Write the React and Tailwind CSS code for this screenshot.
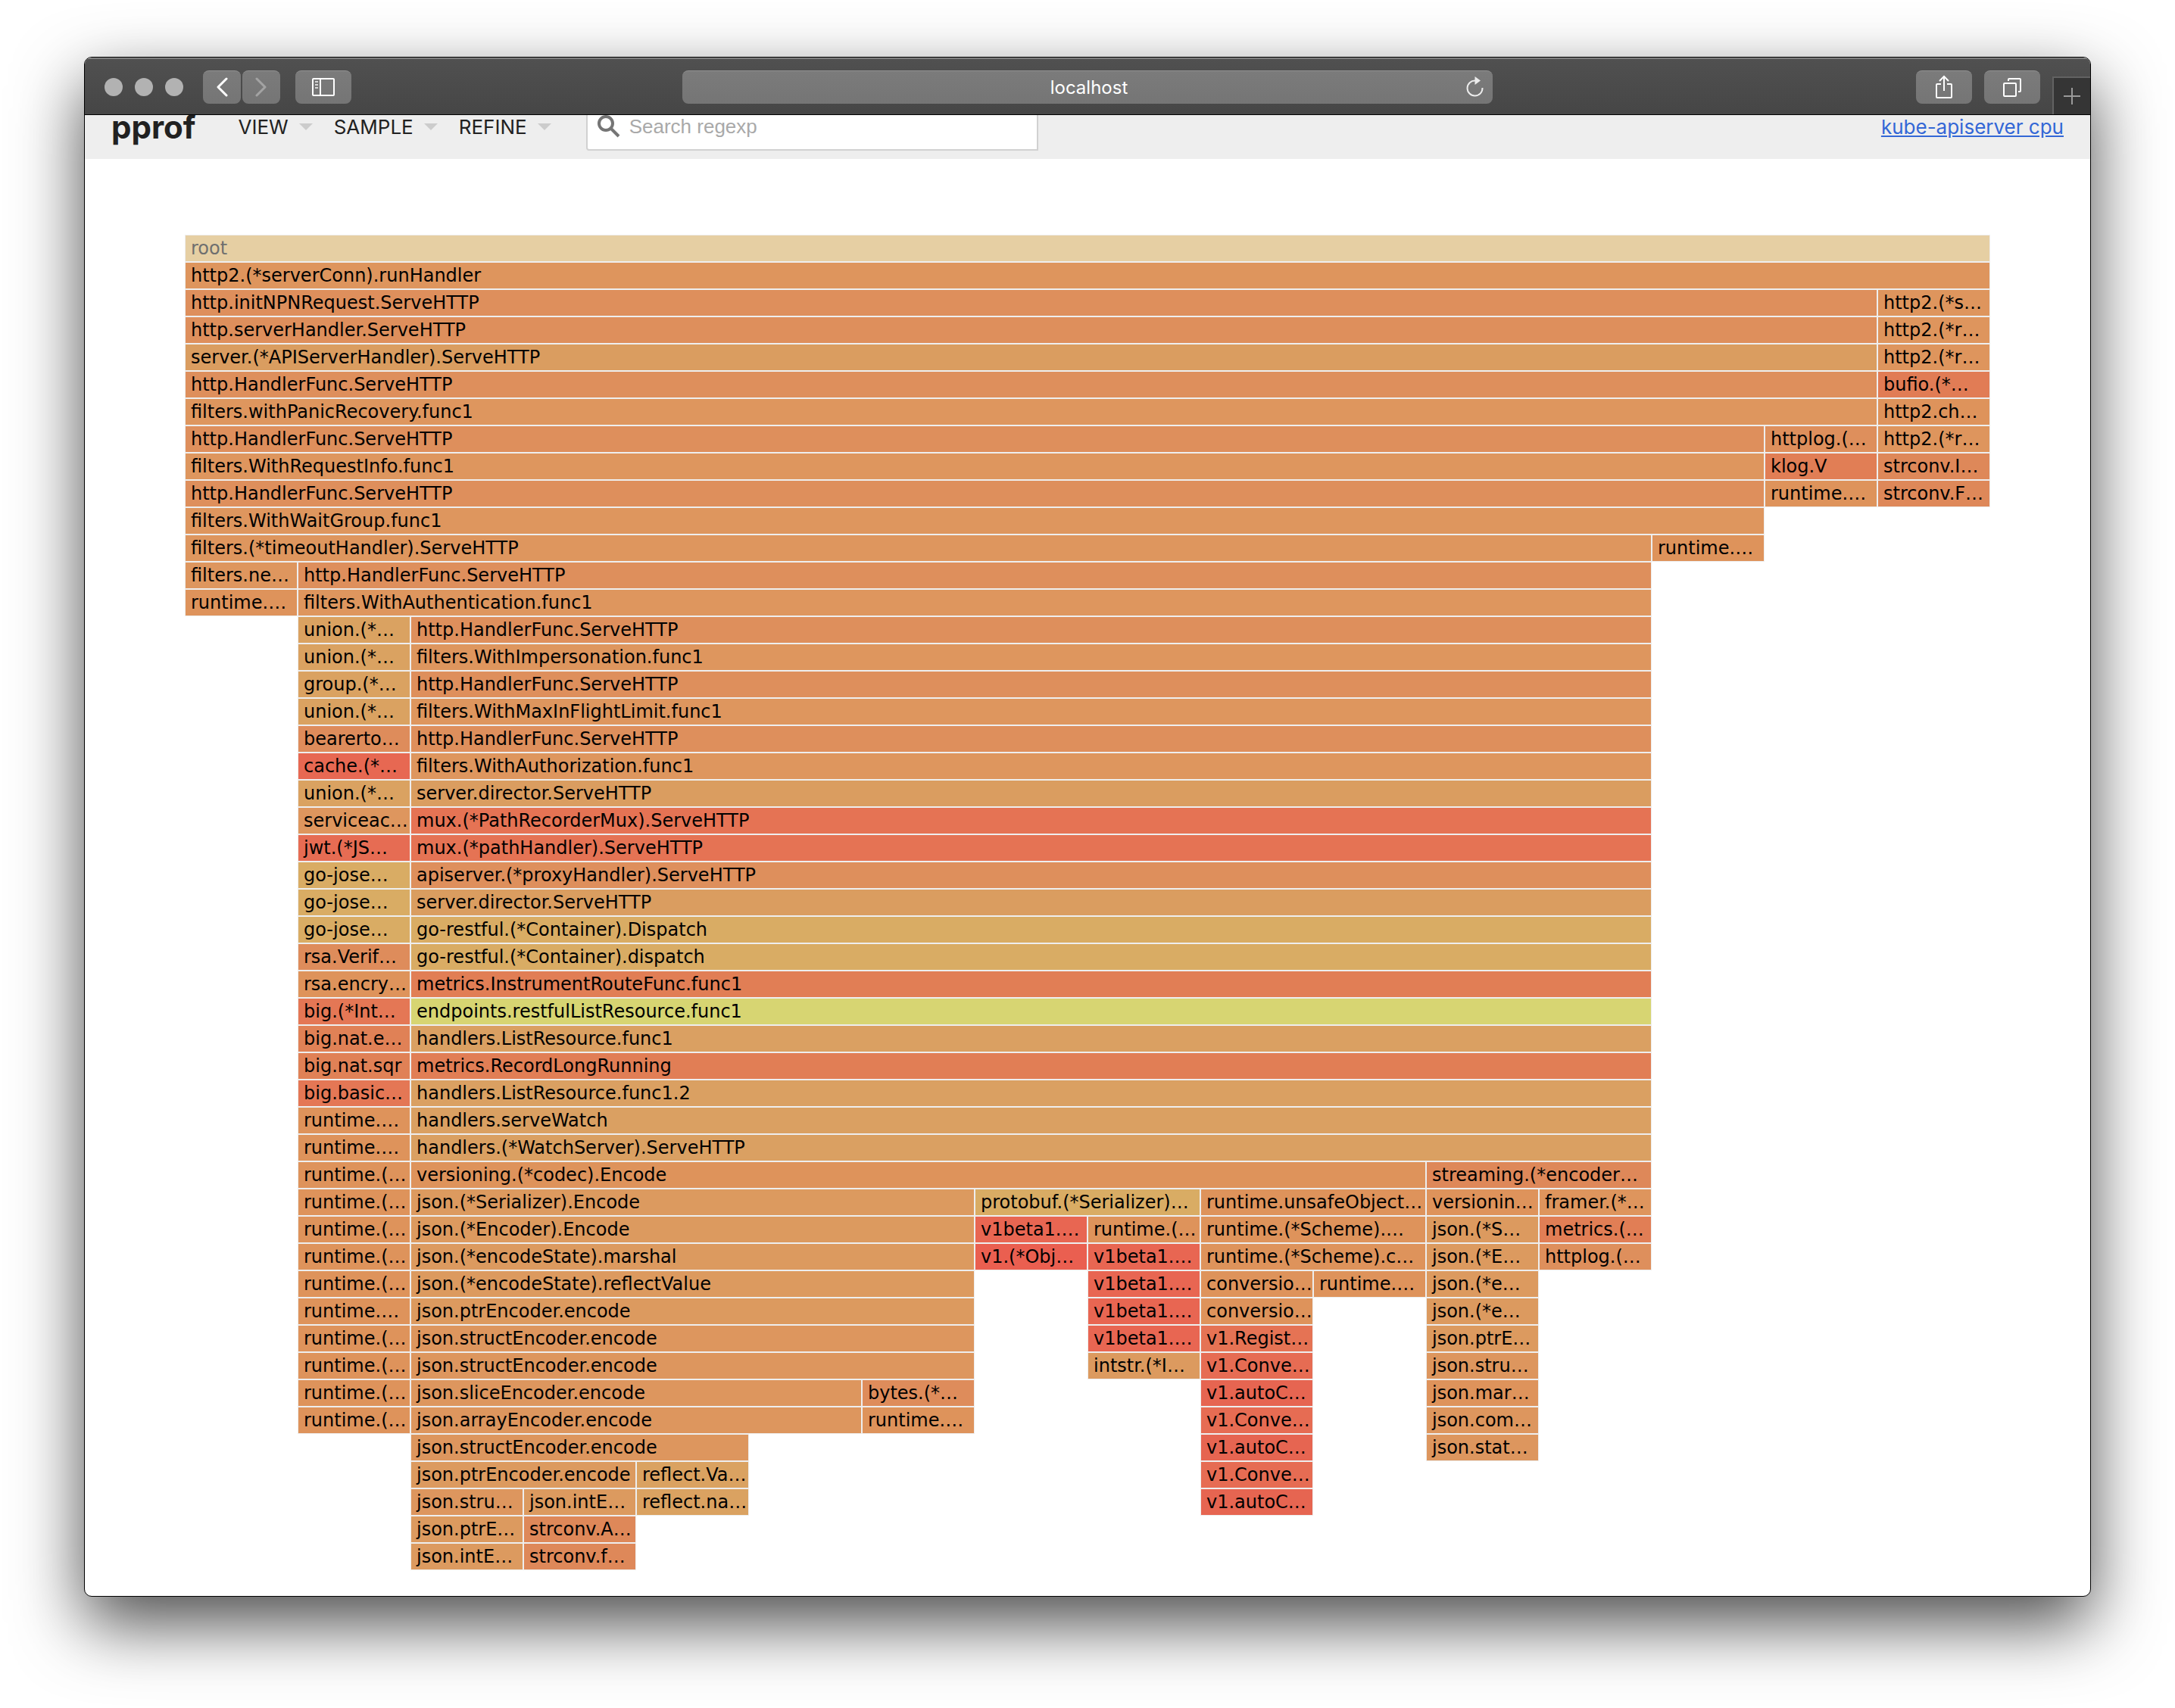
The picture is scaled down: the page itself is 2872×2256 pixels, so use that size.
const ROOT = 'bg-[#e6cfa3] text-[#6f6f6f]';
const HTTP2 = 'bg-[#de955d]';
const HTTP = 'bg-[#de8f5c]';
const SERVER = 'bg-[#da9d60]';
const FILTERS = 'bg-[#de965e]';
const BUFIO = 'bg-[#e17c55]';
const KLOG = 'bg-[#e17e55]';
const RUNTIME = 'bg-[#de935b]';
const STRCONV = 'bg-[#de8859]';
const UNION = 'bg-[#daa261]';
const BEARER = 'bg-[#de8c5b]';
const CACHE = 'bg-[#e76852]';
const MUX = 'bg-[#e57354]';
const GOREST = 'bg-[#d9ac64]';
const METRICS = 'bg-[#e17e55]';
const BIGNAT = 'bg-[#e08156]';
const BIG = 'bg-[#e47755]';
const ENDPOINTS = 'bg-[#d7d572]';
const HANDLERS = 'bg-[#daa062]';
const JSON_ENC = 'bg-[#dc9a5f]';
const JSON_STRUCT = 'bg-[#dd965e]';
const V1BETA1 = 'bg-[#e86652]';
const V1OBJ = 'bg-[#ea5f50]';
const V1CONVE = 'bg-[#e66c53]';
const V1AUTO = 'bg-[#e66551]';

// One entry per stack depth; each frame is [first column, column span, label, colour].
const depths = [
  [[0, 16, 'root', ROOT]],
  [[0, 16, 'http2.(*serverConn).runHandler', HTTP2]],
  [[0, 15, 'http.initNPNRequest.ServeHTTP', HTTP], [15, 1, 'http2.(*s…', HTTP2]],
  [[0, 15, 'http.serverHandler.ServeHTTP', HTTP], [15, 1, 'http2.(*r…', HTTP2]],
  [[0, 15, 'server.(*APIServerHandler).ServeHTTP', SERVER], [15, 1, 'http2.(*r…', HTTP2]],
  [[0, 15, 'http.HandlerFunc.ServeHTTP', HTTP], [15, 1, 'bufio.(*…', BUFIO]],
  [[0, 15, 'filters.withPanicRecovery.func1', FILTERS], [15, 1, 'http2.ch…', RUNTIME]],
  [[0, 14, 'http.HandlerFunc.ServeHTTP', HTTP], [14, 1, 'httplog.(…', HTTP], [15, 1, 'http2.(*r…', HTTP2]],
  [[0, 14, 'filters.WithRequestInfo.func1', FILTERS], [14, 1, 'klog.V', KLOG], [15, 1, 'strconv.I…', STRCONV]],
  [[0, 14, 'http.HandlerFunc.ServeHTTP', HTTP], [14, 1, 'runtime.…', RUNTIME], [15, 1, 'strconv.F…', STRCONV]],
  [[0, 14, 'filters.WithWaitGroup.func1', FILTERS]],
  [[0, 13, 'filters.(*timeoutHandler).ServeHTTP', FILTERS], [13, 1, 'runtime.…', RUNTIME]],
  [[0, 1, 'filters.ne…', FILTERS], [1, 12, 'http.HandlerFunc.ServeHTTP', HTTP]],
  [[0, 1, 'runtime.…', RUNTIME], [1, 12, 'filters.WithAuthentication.func1', FILTERS]],
  [[1, 1, 'union.(*…', UNION], [2, 11, 'http.HandlerFunc.ServeHTTP', HTTP]],
  [[1, 1, 'union.(*…', UNION], [2, 11, 'filters.WithImpersonation.func1', FILTERS]],
  [[1, 1, 'group.(*…', UNION], [2, 11, 'http.HandlerFunc.ServeHTTP', HTTP]],
  [[1, 1, 'union.(*…', UNION], [2, 11, 'filters.WithMaxInFlightLimit.func1', FILTERS]],
  [[1, 1, 'bearerto…', BEARER], [2, 11, 'http.HandlerFunc.ServeHTTP', HTTP]],
  [[1, 1, 'cache.(*…', CACHE], [2, 11, 'filters.WithAuthorization.func1', FILTERS]],
  [[1, 1, 'union.(*…', UNION], [2, 11, 'server.director.ServeHTTP', SERVER]],
  [[1, 1, 'serviceac…', FILTERS], [2, 11, 'mux.(*PathRecorderMux).ServeHTTP', MUX]],
  [[1, 1, 'jwt.(*JS…', V1CONVE], [2, 11, 'mux.(*pathHandler).ServeHTTP', MUX]],
  [[1, 1, 'go-jose…', GOREST], [2, 11, 'apiserver.(*proxyHandler).ServeHTTP', HTTP]],
  [[1, 1, 'go-jose…', GOREST], [2, 11, 'server.director.ServeHTTP', SERVER]],
  [[1, 1, 'go-jose…', GOREST], [2, 11, 'go-restful.(*Container).Dispatch', GOREST]],
  [[1, 1, 'rsa.Verif…', BEARER], [2, 11, 'go-restful.(*Container).dispatch', GOREST]],
  [[1, 1, 'rsa.encry…', RUNTIME], [2, 11, 'metrics.InstrumentRouteFunc.func1', METRICS]],
  [[1, 1, 'big.(*Int…', BIG], [2, 11, 'endpoints.restfulListResource.func1', ENDPOINTS]],
  [[1, 1, 'big.nat.e…', BIGNAT], [2, 11, 'handlers.ListResource.func1', HANDLERS]],
  [[1, 1, 'big.nat.sqr', BIGNAT], [2, 11, 'metrics.RecordLongRunning', METRICS]],
  [[1, 1, 'big.basic…', BIG], [2, 11, 'handlers.ListResource.func1.2', HANDLERS]],
  [[1, 1, 'runtime.…', RUNTIME], [2, 11, 'handlers.serveWatch', HANDLERS]],
  [[1, 1, 'runtime.…', RUNTIME], [2, 11, 'handlers.(*WatchServer).ServeHTTP', HANDLERS]],
  [[1, 1, 'runtime.(…', RUNTIME], [2, 9, 'versioning.(*codec).Encode', RUNTIME], [11, 2, 'streaming.(*encoder…', STRCONV]],
  [[1, 1, 'runtime.(…', RUNTIME], [2, 5, 'json.(*Serializer).Encode', JSON_ENC], [7, 2, 'protobuf.(*Serializer)…', GOREST], [9, 2, 'runtime.unsafeObject…', RUNTIME], [11, 1, 'versionin…', RUNTIME], [12, 1, 'framer.(*…', HTTP2]],
  [[1, 1, 'runtime.(…', RUNTIME], [2, 5, 'json.(*Encoder).Encode', JSON_ENC], [7, 1, 'v1beta1.…', V1BETA1], [8, 1, 'runtime.(…', RUNTIME], [9, 2, 'runtime.(*Scheme).…', RUNTIME], [11, 1, 'json.(*S…', JSON_ENC], [12, 1, 'metrics.(…', METRICS]],
  [[1, 1, 'runtime.(…', RUNTIME], [2, 5, 'json.(*encodeState).marshal', JSON_ENC], [7, 1, 'v1.(*Obj…', V1OBJ], [8, 1, 'v1beta1.…', V1BETA1], [9, 2, 'runtime.(*Scheme).c…', RUNTIME], [11, 1, 'json.(*E…', JSON_ENC], [12, 1, 'httplog.(…', HTTP]],
  [[1, 1, 'runtime.(…', RUNTIME], [2, 5, 'json.(*encodeState).reflectValue', JSON_ENC], [8, 1, 'v1beta1.…', V1BETA1], [9, 1, 'conversio…', RUNTIME], [10, 1, 'runtime.…', RUNTIME], [11, 1, 'json.(*e…', JSON_ENC]],
  [[1, 1, 'runtime.…', RUNTIME], [2, 5, 'json.ptrEncoder.encode', JSON_ENC], [8, 1, 'v1beta1.…', V1BETA1], [9, 1, 'conversio…', RUNTIME], [11, 1, 'json.(*e…', JSON_ENC]],
  [[1, 1, 'runtime.(…', RUNTIME], [2, 5, 'json.structEncoder.encode', JSON_STRUCT], [8, 1, 'v1beta1.…', V1BETA1], [9, 1, 'v1.Regist…', MUX], [11, 1, 'json.ptrE…', JSON_ENC]],
  [[1, 1, 'runtime.(…', RUNTIME], [2, 5, 'json.structEncoder.encode', JSON_STRUCT], [8, 1, 'intstr.(*I…', JSON_ENC], [9, 1, 'v1.Conve…', V1CONVE], [11, 1, 'json.stru…', JSON_STRUCT]],
  [[1, 1, 'runtime.(…', RUNTIME], [2, 4, 'json.sliceEncoder.encode', JSON_STRUCT], [6, 1, 'bytes.(*…', BEARER], [9, 1, 'v1.autoC…', V1AUTO], [11, 1, 'json.mar…', RUNTIME]],
  [[1, 1, 'runtime.(…', RUNTIME], [2, 4, 'json.arrayEncoder.encode', JSON_STRUCT], [6, 1, 'runtime.…', RUNTIME], [9, 1, 'v1.Conve…', V1CONVE], [11, 1, 'json.com…', JSON_STRUCT]],
  [[2, 3, 'json.structEncoder.encode', JSON_STRUCT], [9, 1, 'v1.autoC…', V1AUTO], [11, 1, 'json.stat…', JSON_STRUCT]],
  [[2, 2, 'json.ptrEncoder.encode', JSON_ENC], [4, 1, 'reflect.Va…', UNION], [9, 1, 'v1.Conve…', V1CONVE]],
  [[2, 1, 'json.stru…', JSON_STRUCT], [3, 1, 'json.intE…', JSON_ENC], [4, 1, 'reflect.na…', UNION], [9, 1, 'v1.autoC…', V1AUTO]],
  [[2, 1, 'json.ptrE…', JSON_ENC], [3, 1, 'strconv.A…', STRCONV]],
  [[2, 1, 'json.intE…', JSON_ENC], [3, 1, 'strconv.f…', STRCONV]],
];

const toolButton =
  'flex h-11 items-center justify-center rounded-lg border-t border-[#929292] bg-linear-to-b from-[#7b7b7b] to-[#757575]';

function TitleBar() {
  return (
    <div className="flex h-[76px] items-center border-t-2 border-b border-t-[#7f7f7f] border-b-black bg-linear-to-b from-[#505050] to-[#464646]">
      <div className="flex flex-1 items-center">
        <div className="ml-[26px] flex gap-4">
          <span className="size-6 rounded-full bg-[#b2b2b2]" />
          <span className="size-6 rounded-full bg-[#b2b2b2]" />
          <span className="size-6 rounded-full bg-[#b2b2b2]" />
        </div>
        <div className="ml-[26px] flex gap-0.5">
          <button type="button" aria-label="Back" className={`${toolButton} w-[50px]`}>
            <svg width="16" height="26" viewBox="0 0 16 26" fill="none" stroke="#ffffff" strokeWidth="3" strokeLinecap="round" strokeLinejoin="round">
              <path d="M14 2 3 13 14 24" />
            </svg>
          </button>
          <button type="button" aria-label="Forward" className={`${toolButton} w-[50px]`}>
            <svg width="16" height="26" viewBox="0 0 16 26" fill="none" stroke="#a3a3a3" strokeWidth="3" strokeLinecap="round" strokeLinejoin="round">
              <path d="M2 2 13 13 2 24" />
            </svg>
          </button>
        </div>
        <button type="button" aria-label="Show sidebar" className={`${toolButton} ml-5 w-[74px]`}>
          <svg width="30" height="24" viewBox="0 0 30 24" fill="none" stroke="#ffffff" strokeWidth="2">
            <rect x="1" y="1" width="28" height="22" rx="1" />
            <path d="M11 1V23" />
            <path d="M4 5H8M4 9H8M4 13H8" stroke="#d6d6d6" />
          </svg>
        </button>
      </div>
      <div className="relative w-[1070px]">
        <input
          type="text"
          aria-label="Address"
          defaultValue="localhost"
          className="block h-11 w-full rounded-lg border-t border-[#929292] bg-linear-to-b from-[#7b7b7b] to-[#757575] pl-1 text-center font-['Inter','Liberation_Sans',sans-serif] text-[24px] text-white outline-none"
        />
        <button type="button" aria-label="Reload" className="absolute inset-y-0 right-3 flex items-center">
          <svg width="24" height="28" viewBox="0 0 24 28" fill="none">
            <path d="M13 5.500A10 10 0 1 0 22.500 15" stroke="#ececec" strokeWidth="2" />
            <path d="M12.500 0V11L20 5.500Z" fill="#ececec" />
          </svg>
        </button>
      </div>
      <div className="flex flex-1 items-center justify-end self-stretch">
        <div className="flex gap-4">
          <button type="button" aria-label="Share" className={`${toolButton} w-[74px]`}>
            <svg width="24" height="32" viewBox="0 0 24 32" fill="none" stroke="#ffffff" strokeWidth="2">
              <path d="M8 12H3Q2 12 2 13V29Q2 30 3 30H21Q22 30 22 29V13Q22 12 21 12H16" />
              <path d="M12 21V2M6 8 12 2 18 8" />
            </svg>
          </button>
          <button type="button" aria-label="Show all tabs" className={`${toolButton} w-[74px]`}>
            <svg width="24" height="26" viewBox="0 0 24 26" fill="none" stroke="#ffffff" strokeWidth="2">
              <rect x="1" y="8" width="16" height="17" rx="1" />
              <path d="M7 5V3Q7 2 8 2H22Q23 2 23 3V18Q23 19 22 19H20" />
            </svg>
          </button>
        </div>
        <button type="button" aria-label="New tab" className="ml-4 flex h-[50px] w-[50px] items-center justify-center self-end border-t-2 border-l-2 border-[#626262] bg-[#353535]">
          <svg width="22" height="22" viewBox="0 0 22 22" stroke="#9a9a9a" strokeWidth="2">
            <path d="M11 0V22M0 11H22" />
          </svg>
        </button>
      </div>
    </div>
  );
}

function Menu({ label }) {
  return (
    <button type="button" className="flex items-center gap-3.5">
      {label}
      <svg width="18" height="9" viewBox="0 0 18 9" fill="#cccccc">
        <path d="M0 0H18L9 9Z" />
      </svg>
    </button>
  );
}

function PageHeader() {
  return (
    <div className="overflow-hidden bg-[#eeeeee]">
      <header className="-mt-7 flex h-[86px] items-center px-[35px] font-['Inter','Liberation_Sans',sans-serif] text-[26px] text-[#212121]">
        <h1 className="text-[42px] font-bold">pprof</h1>
        <nav className="ml-14 flex gap-7">
          <Menu label="VIEW" />
          <Menu label="SAMPLE" />
          <Menu label="REFINE" />
        </nav>
        <label className="ml-[46px] flex h-16 w-[597px] items-center rounded-l border-2 border-[#d1d1d1] bg-white pl-[13px]">
          <svg width="30" height="30" viewBox="0 0 30 30" fill="none" stroke="#757575">
            <circle cx="11" cy="11" r="9" strokeWidth="4" />
            <path d="M17 17 28 28" strokeWidth="4" />
          </svg>
          <input
            type="text"
            aria-label="Search regexp"
            placeholder="Search regexp"
            className="ml-3 min-w-0 flex-1 bg-transparent font-['Liberation_Sans',sans-serif] outline-none placeholder:text-[#a9a9a9]"
          />
        </label>
        <a href="#profile" className="ml-auto text-[#3367d6] underline">kube-apiserver cpu</a>
      </header>
    </div>
  );
}

function FlameGraph() {
  return (
    <div className="px-[132px] pt-[100px] pb-[34px] font-['DejaVu_Sans',sans-serif] text-[24px] leading-[34px] text-black">
      {depths.map((frames, depth) => (
        <div key={depth} className="grid grid-cols-16">
          {frames.map(([start, span, label, tone]) => (
            <div
              key={start}
              className={`overflow-hidden border border-[#eeeeee] pl-[7px] whitespace-nowrap ${tone}`}
              style={{ gridColumn: `${start + 1} / span ${span}` }}
            >
              {label}
            </div>
          ))}
        </div>
      ))}
    </div>
  );
}

export default function App() {
  return (
    <main className="min-h-screen overflow-hidden bg-white px-[111px] pt-[75px] pb-[147px]">
      <div className="overflow-hidden rounded-[10px] border border-black bg-white shadow-[0_36px_90px_rgba(0,0,0,0.7)]">
        <TitleBar />
        <PageHeader />
        <FlameGraph />
      </div>
    </main>
  );
}
